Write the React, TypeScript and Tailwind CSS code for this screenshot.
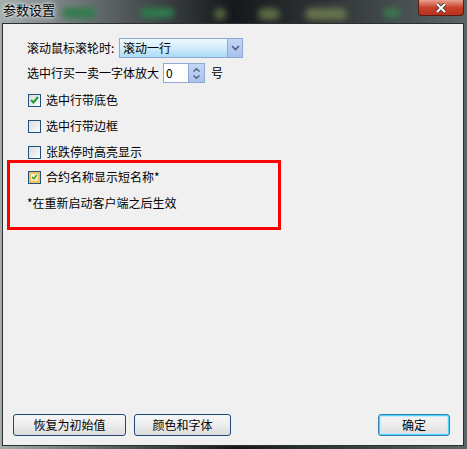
import React from 'react';

const font = { fontFamily: '"Noto Sans CJK SC", "Noto Sans", sans-serif' };

const Check = ({ checked, hover }: { checked?: boolean; hover?: boolean }) => (
  <div className="w-[13px] h-[13px] border border-[#1c5180] bg-white flex items-center justify-center shrink-0">
    <div
      className={
        hover
          ? 'w-[11px] h-[11px] border-2 border-[#f2bf5e] bg-gradient-to-br from-[#fff3d2] to-[#ffe6a8] flex items-center justify-center'
          : 'w-[11px] h-[11px] bg-gradient-to-br from-[#dcdcdc] to-[#fbfbfb] flex items-center justify-center'
      }
    >
      {checked && (
        <svg width="9" height="8" viewBox="0 0 9 8" className={hover ? 'scale-90' : ''}>
          <path d="M1 4 L3.5 6.5 L8 1" fill="none" stroke="#1f9c2a" strokeWidth="2" />
        </svg>
      )}
    </div>
  </div>
);

const CheckRow = ({ label, checked, hover }: { label: string; checked?: boolean; hover?: boolean }) => (
  <div className="flex items-center h-5 gap-[5px]">
    <Check checked={checked} hover={hover} />
    <span>{label}</span>
  </div>
);

const Btn = ({ label, width, primary }: { label: string; width: string; primary?: boolean }) => (
  <button
    className={
      'h-[22px] rounded-[3px] border bg-gradient-to-b from-[#f6f6f6] via-[#ededed] to-[#dcdcdc] text-[12px] text-black ' +
      width +
      (primary ? ' border-[#3c7fb1] shadow-[inset_0_0_0_1px_#48d2fb,inset_0_0_0_2px_#c9ecfd]' : ' border-[#1f4a78]')
    }
  >
    {label}
  </button>
);

export default function App() {
  return (
    <div
      className="relative w-[467px] h-[449px] overflow-hidden bg-gradient-to-r from-[#a4acac] via-[#15191c] to-[#5d6565] text-[12px] text-black"
      style={font}
    >
      {/* blurred glass */}
      <div className="absolute left-[62px] top-[8px] w-[34px] h-[10px] rounded-full bg-[#2f7c4c] blur-[3px]" />
      <div className="absolute left-[140px] top-[8px] w-[34px] h-[10px] rounded-full bg-[#2f7c4c] blur-[3px]" />
      <div className="absolute left-[214px] top-[8px] w-[12px] h-[12px] rounded-full bg-[#57663f] blur-[3px]" />
      <div className="absolute left-[258px] top-[8px] w-[22px] h-[12px] rounded-full bg-[#5d6a45] blur-[3px]" />
      <div className="absolute left-[305px] top-[8px] w-[42px] h-[12px] rounded-full bg-[#67734d] blur-[3px]" />
      <div className="absolute left-[383px] top-[8px] w-[18px] h-[10px] rounded-full bg-[#3a7650] blur-[3px]" />

      <div className="relative flex flex-col h-full">
        {/* title bar */}
        <div className="h-[23px] flex items-start justify-between shrink-0">
          <span className="pl-[3px] pt-[1px] text-[13px] leading-[17px] [text-shadow:0_0_6px_#ffffff,0_0_3px_#ffffff]">参数设置</span>
          <div className="mr-[3px] w-[46px] h-[16px] rounded-b-[4px] border border-t-0 border-[#5a1a10] bg-gradient-to-b from-[#e8a090] via-[#c8412a] to-[#b8321c] flex items-center justify-center">
            <svg width="12" height="10" viewBox="0 0 12 10">
              <path d="M2 1 L10 9 M10 1 L2 9" stroke="#3a3a3a" strokeWidth="3.6" />
              <path d="M2 1 L10 9 M10 1 L2 9" stroke="#ffffff" strokeWidth="2" />
            </svg>
          </div>
        </div>

        {/* client area */}
        <div className="flex-1 ml-[2px] mr-[3px] mb-[3px] border border-[#2b2f31] bg-[#f0f0f0] flex flex-col">
          <div className="pl-[24px] pt-[14px] flex flex-col">
            <div className="flex items-center h-5">
              <span className="w-[92px]">滚动鼠标滚轮时:</span>
              <div className="w-[124px] h-5 border border-[#8ea7d4] flex">
                <div className="flex-1 bg-gradient-to-b from-[#eef7fd] via-[#d2ecfb] to-[#a9daf5] pl-[3px] leading-[18px]">滚动一行</div>
                <div className="w-[15px] border-l border-[#8ea7d4] bg-gradient-to-b from-[#c4d6f3] to-[#a9c1ec] flex items-center justify-center">
                  <svg width="9" height="6" viewBox="0 0 9 6">
                    <path d="M1 1 L4.5 4.5 L8 1" fill="none" stroke="#4a5f86" strokeWidth="1.6" />
                  </svg>
                </div>
              </div>
            </div>

            <div className="flex items-center h-5 mt-[5px]">
              <span className="w-[136px]">选中行买一卖一字体放大</span>
              <div className="w-[42px] h-5 border border-[#8ea7d4] flex bg-white">
                <div className="flex-1 pl-[2px] leading-[18px]">0</div>
                <div className="w-[16px] border-l border-[#8ea7d4] bg-gradient-to-b from-[#c4d6f3] to-[#aac2ec] flex flex-col items-center justify-center gap-[3px]">
                  <svg width="7" height="4" viewBox="0 0 7 4">
                    <path d="M0.5 3.5 L3.5 0.8 L6.5 3.5" fill="none" stroke="#4a5f86" strokeWidth="1.4" />
                  </svg>
                  <svg width="7" height="4" viewBox="0 0 7 4">
                    <path d="M0.5 0.5 L3.5 3.2 L6.5 0.5" fill="none" stroke="#4a5f86" strokeWidth="1.4" />
                  </svg>
                </div>
              </div>
              <span className="ml-[6px]">号</span>
            </div>

            <div className="pl-[1px] mt-[7px] flex flex-col gap-[6px]">
              <CheckRow label="选中行带底色" checked />
              <CheckRow label="选中行带边框" />
              <CheckRow label="张跌停时高亮显示" />
            </div>
          </div>

          {/* highlighted box */}
          <div className="ml-[4px] mt-[-2px] w-[274px] h-[70px] border-[3px] border-[#ff0000] pl-[18px] pt-[4px] flex flex-col">
            <CheckRow label="合约名称显示短名称*" checked hover />
            <div className="h-5 mt-[6px] ml-[-1px] flex items-center">*在重新启动客户端之后生效</div>
          </div>

          <div className="flex-1" />

          <div className="flex items-center pl-[10px] pr-[13px] pb-[9px]">
            <Btn label="恢复为初始值" width="w-[113px]" />
            <div className="w-[8px]" />
            <Btn label="颜色和字体" width="w-[97px]" />
            <div className="flex-1" />
            <Btn label="确定" width="w-[72px]" primary />
          </div>
        </div>
      </div>
    </div>
  );
}
